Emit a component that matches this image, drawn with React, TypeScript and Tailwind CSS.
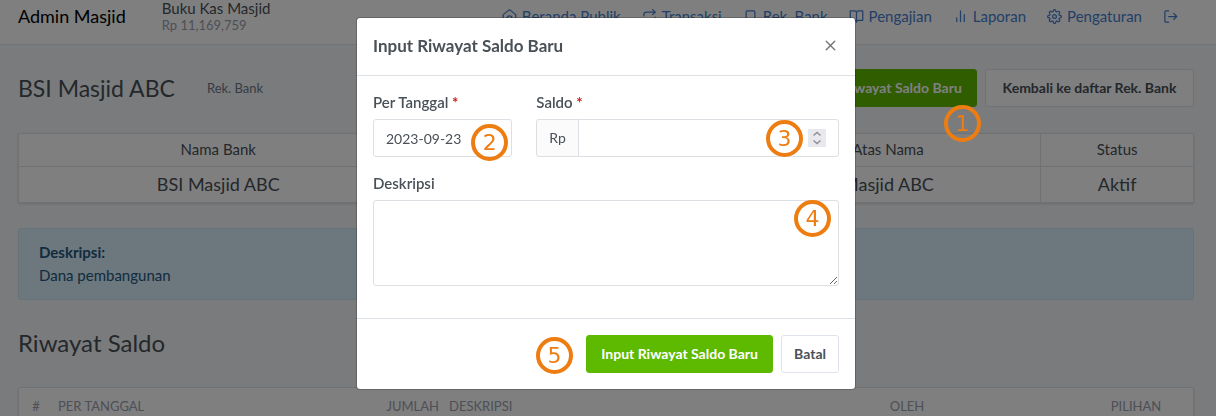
import React from "react";
import { FiRepeat, FiBookmark, FiX } from "react-icons/fi";

const stroke = {
  viewBox: "0 0 24 24",
  fill: "none",
  stroke: "currentColor",
  strokeWidth: 2,
  strokeLinecap: "round" as const,
  strokeLinejoin: "round" as const,
  className: "size-[15px] shrink-0",
  "aria-hidden": true,
};

const HomeIcon = () => (
  <svg {...stroke}>
    <path d="M2 21V9l10-8 10 8v12h-6v-6a4 4 0 0 0-8 0v6z" />
  </svg>
);
const BookIcon = () => (
  <svg {...stroke}>
    <path d="M2 3h7a3 3 0 0 1 3 3v15a3 3 0 0 0-3-3H2zM22 3h-7a3 3 0 0 0-3 3v15a3 3 0 0 1 3-3h7z" />
  </svg>
);
const ChartIcon = () => (
  <svg {...stroke}>
    <path d="M6 20v-6M12 20V3M18 20V9" />
  </svg>
);
const GearIcon = () => (
  <svg {...stroke}>
    <circle cx="12" cy="12" r="3" />
    <path d="M19.4 15a1.65 1.65 0 0 0 .33 1.82l.06.06a2 2 0 1 1-2.83 2.83l-.06-.06a1.65 1.65 0 0 0-2.8 1.17V21a2 2 0 1 1-4 0v-.09a1.65 1.65 0 0 0-2.9-1.26l-.06.06a2 2 0 1 1-2.83-2.83l.06-.06A1.65 1.65 0 0 0 3.09 14H3a2 2 0 1 1 0-4h.09a1.65 1.65 0 0 0 1.26-2.9l-.06-.06a2 2 0 1 1 2.83-2.83l.06.06A1.65 1.65 0 0 0 10 3.09V3a2 2 0 1 1 4 0v.09a1.65 1.65 0 0 0 2.82 1.18l.06-.06a2 2 0 1 1 2.83 2.83l-.06.06A1.65 1.65 0 0 0 20.91 10H21a2 2 0 1 1 0 4h-.09a1.65 1.65 0 0 0-1.51 1z" />
  </svg>
);
const LogoutIcon = () => (
  <svg {...stroke}>
    <path d="M9 3H5a2 2 0 0 0-2 2v14a2 2 0 0 0 2 2h4M9 12h13M17 7l5 5-5 5" />
  </svg>
);

const nav: { label: string; icon: React.ReactNode }[] = [
  { label: "Beranda Publik", icon: <HomeIcon /> },
  { label: "Transaksi", icon: <FiRepeat className="size-[15px] shrink-0" /> },
  { label: "Rek. Bank", icon: <FiBookmark className="size-[15px] shrink-0" /> },
  { label: "Pengajian", icon: <BookIcon /> },
  { label: "Laporan", icon: <ChartIcon /> },
  { label: "Pengaturan", icon: <GearIcon /> },
];

function Step({ n, place }: { n: number; place: string }) {
  return (
    <span
      className={`absolute z-50 flex size-[37px] items-center justify-center rounded-full border-4 border-[#ee7d11] font-['DejaVu_Sans',sans-serif] text-[22px] leading-none font-normal text-[#ee7d11] ${place}`}
    >
      {n}
    </span>
  );
}

const btn =
  "h-[38px] rounded-[3px] border px-3 text-sm font-bold whitespace-nowrap";
const primary = `${btn} min-w-[187px] border-[#5eba00] bg-[#5eba00] text-white`;
const secondary = `${btn} border-[#dee2ea] bg-white text-[#495057]`;
const field = "border border-[#dcdfe3] bg-white text-sm text-[#495057]";

export default function App() {
  return (
    <div className="h-screen overflow-hidden bg-[#f5f7fb] pr-1 font-['Lato','Liberation_Sans',sans-serif] text-[15px] leading-[23px] text-[#495057]">
      <header className="-mr-1 flex items-start border-b border-[#e4e8ee] bg-white px-[18px] pb-[9px]">
        <a href="#" className="mt-1 text-lg leading-6 text-black">
          Admin Masjid
        </a>
        <div className="ml-9">
          <div className="leading-4">Buku Kas Masjid</div>
          <div className="text-[13px] leading-[19px] text-[#9aa0ac]">Rp 11,169,759</div>
        </div>
        <nav className="mt-[5px] mr-5 ml-auto flex gap-[21px] text-[#467fcf]">
          {nav.map((item) => (
            <a key={item.label} href="#" className="flex items-center gap-[5px] whitespace-nowrap">
              {item.icon}
              {item.label}
            </a>
          ))}
          <a href="#" aria-label="Keluar" className="flex items-center">
            <LogoutIcon />
          </a>
        </nav>
      </header>

      <main className="px-[18px]">
        <div className="mt-6 flex items-center">
          <h1 className="text-[23px] leading-[38px]">BSI Masjid ABC</h1>
          <span className="ml-8 text-[13px] text-[#6e7687]">Rek. Bank</span>
          <div className="ml-auto flex gap-2">
            <div className="relative">
              <button className={primary}>Input Riwayat Saldo Baru</button>
              <Step n={1} place="top-9 -right-1" />
            </div>
            <button className={`${secondary} min-w-[209px]`}>Kembali ke daftar Rek. Bank</button>
          </div>
        </div>

        <table className="mt-[26px] w-full table-fixed border-collapse border border-[#dee2e6] bg-white text-center shadow-sm">
          <colgroup>
            <col className="w-[34%]" />
            <col className="w-[27%]" />
            <col className="w-[26%]" />
            <col className="w-[13%]" />
          </colgroup>
          <thead>
            <tr className="h-[33px]">
              <th className="border border-[#dee2e6] pb-0.5 font-normal">Nama Bank</th>
              <td className="border border-[#dee2e6]" />
              <th className="border border-[#dee2e6] pb-0.5 font-normal">Atas Nama</th>
              <th className="border border-[#dee2e6] pb-0.5 font-normal">Status</th>
            </tr>
          </thead>
          <tbody>
            <tr className="h-9 text-lg">
              <td className="border border-[#dee2e6] pb-0.5">BSI Masjid ABC</td>
              <td className="border border-[#dee2e6]" />
              <td className="border border-[#dee2e6] pb-0.5">Masjid ABC</td>
              <td className="border border-[#dee2e6] pb-0.5">Aktif</td>
            </tr>
          </tbody>
        </table>

        <div className="mt-[25px] rounded-[3px] border border-[#cbe7f7] bg-[#daeefc] px-5 py-3 text-[#24587e]">
          <strong className="block">Deskripsi:</strong>
          Dana pembangunan
        </div>

        <h2 className="mt-[22px] text-2xl leading-[42px]">Riwayat Saldo</h2>

        <div className="mt-[23px] rounded-[3px] border border-[#dee2ea] bg-white shadow-sm">
          <table className="w-full table-fixed text-[13px] text-[#9aa0ac]">
            <colgroup>
              <col className="w-[34px]" />
              <col className="w-[226px]" />
              <col className="w-[165px]" />
              <col />
              <col className="w-[344px]" />
              <col className="w-[114px]" />
            </colgroup>
            <thead>
              <tr className="h-9">
                <th className="text-center font-normal">#</th>
                <th className="px-[5px] text-left font-normal">PER TANGGAL</th>
                <th className="px-[5px] text-right font-normal">JUMLAH</th>
                <th className="px-[5px] text-left font-normal">DESKRIPSI</th>
                <th className="px-[5px] text-center font-normal">OLEH</th>
                <th className="px-[5px] text-center font-normal">PILIHAN</th>
              </tr>
            </thead>
          </table>
        </div>
      </main>

      <div className="fixed inset-0 z-20 bg-black/50" />

      <div className="fixed inset-0 z-30 flex items-start justify-center pt-[18px] pr-1">
        <form
          role="dialog"
          aria-labelledby="modal-title"
          className="w-full max-w-[498px] rounded-[3px] bg-white shadow-[0_0_0_1px_rgba(0,0,0,0.2)]"
        >
          <div className="flex items-center justify-between border-b border-[#dee2e6] px-4 pt-[15px] pb-[17px]">
            <h3 id="modal-title" className="text-[17px] leading-[25px] font-bold">
              Input Riwayat Saldo Baru
            </h3>
            <button type="button" aria-label="Tutup" className="text-[#777777]">
              <FiX className="size-[17px]" />
            </button>
          </div>

          <div className="grid grid-cols-12 gap-x-6 px-4 pt-[15px] pb-8">
            <div className="relative col-span-4">
              <label htmlFor="date" className="mb-[5px] block font-semibold">
                Per Tanggal <span className="font-bold text-[#cd201f]">*</span>
              </label>
              <input
                id="date"
                type="text"
                defaultValue="2023-09-23"
                className={`${field} block h-[38px] w-full rounded-[3px] px-3`}
              />
              <Step n={2} place="right-1 -bottom-1" />
            </div>

            <div className="relative col-span-8">
              <label htmlFor="amount" className="mb-[5px] block font-semibold">
                Saldo <span className="font-bold text-[#cd201f]">*</span>
              </label>
              <div className="flex">
                <span className="flex h-[38px] items-center rounded-l-[3px] border border-[#dcdfe3] bg-[#fbfbfc] px-3 text-sm">
                  Rp
                </span>
                <div className={`${field} -ml-px flex h-[38px] min-w-0 grow items-center rounded-r-[3px] px-3`}>
                  <input
                    id="amount"
                    type="text"
                    inputMode="numeric"
                    className="min-w-0 grow bg-transparent outline-none"
                  />
                  <button
                    type="button"
                    aria-label="Ubah saldo"
                    className="flex size-[18px] items-center justify-center bg-[#e9e9ed] text-[#8f8f9a]"
                  >
                    <svg viewBox="0 0 18 18" fill="none" stroke="currentColor" strokeWidth="1.5" className="size-[18px]">
                      <path d="M5.5 6.5 9 3.5l3.5 3M5.5 11.5l3.5 3 3.5-3" />
                    </svg>
                  </button>
                </div>
              </div>
              <Step n={3} place="right-9 bottom-0" />
            </div>

            <div className="relative col-span-12 mt-[15px]">
              <label htmlFor="note" className="mb-[5px] block font-semibold">
                Deskripsi
              </label>
              <textarea id="note" className={`${field} block h-[86px] w-full resize-y rounded-[3px] px-3 py-2`} />
              <Step n={4} place="top-7 right-2" />
            </div>
          </div>

          <div className="flex items-center justify-end gap-2 border-t border-[#dee2e6] p-4">
            <div className="relative">
              <button type="button" className={primary}>
                Input Riwayat Saldo Baru
              </button>
              <Step n={5} place="top-0.5 -left-[50px]" />
            </div>
            <button type="button" className={secondary}>
              Batal
            </button>
          </div>
        </form>
      </div>
    </div>
  );
}
